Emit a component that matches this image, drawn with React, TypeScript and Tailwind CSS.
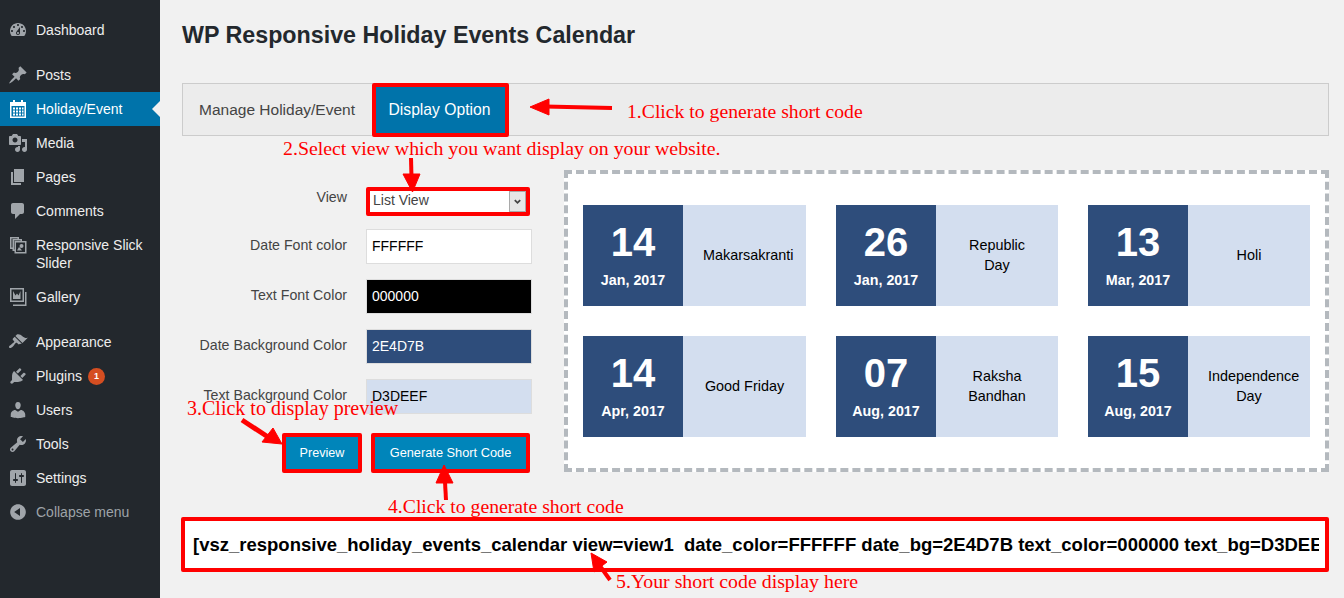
import React from "react";

interface MenuItem {
  label: string;
  icon: React.ReactNode;
  tall?: boolean;
  active?: boolean;
  badge?: string;
  gapBefore?: boolean;
  muted?: boolean;
}

const p = (d: string) => <path d={d} />;

const icons = {
  dashboard: p("M3.76 16h12.48c1.1-1.37 1.76-3.11 1.76-5 0-4.42-3.58-8-8-8s-8 3.58-8 8c0 1.89.66 3.63 1.76 5zM10 4c.55 0 1 .45 1 1s-.45 1-1 1-1-.45-1-1 .45-1 1-1zM6 6c.55 0 1 .45 1 1s-.45 1-1 1-1-.45-1-1 .45-1 1-1zm8 0c.55 0 1 .45 1 1s-.45 1-1 1-1-.45-1-1 .45-1 1-1zm-5.37 5.55L12 7v6c0 1.1-.9 2-2 2s-2-.9-2-2c0-.57.24-1.08.63-1.45zM4 10c.55 0 1 .45 1 1s-.45 1-1 1-1-.45-1-1 .45-1 1-1zm12 0c.55 0 1 .45 1 1s-.45 1-1 1-1-.45-1-1 .45-1 1-1zm-5 3c0-.55-.45-1-1-1s-1 .45-1 1 .45 1 1 1 1-.45 1-1z"),
  post: p("M10.44 3.02l1.82-1.82 6.36 6.35-1.83 1.82c-1.05-.68-2.48-.57-3.41.36l-.75.75c-.92.93-1.04 2.35-.35 3.41l-1.83 1.82-2.41-2.41-2.8 2.79c-.42.42-3.38 2.71-3.8 2.29s1.86-3.39 2.28-3.81l2.79-2.79L4.1 9.36l1.83-1.82c1.05.69 2.48.57 3.4-.36l.75-.75c.93-.92 1.05-2.35.36-3.41z"),
  calendar: (
    <path
      fillRule="evenodd"
      d="M5 1h2v2h6V1h2v2h3v16H2V3h3V1zM3.5 7v10.5h13V7h-13zM5 8.5h2v2H5v-2zm3 0h2v2H8v-2zm3 0h2v2h-2v-2zm3 0h1.5v2H14v-2zM5 11.5h2v2H5v-2zm3 0h2v2H8v-2zm3 0h2v2h-2v-2zm3 0h1.5v2H14v-2zM5 14.5h2v2H5v-2zm3 0h2v2H8v-2zm3 0h2v2h-2v-2zm3 0h1.5v2H14v-2z"
    />
  ),
  media: p("M13 11V4c0-.55-.45-1-1-1h-1.67L9 1H5L3.67 3H2c-.55 0-1 .45-1 1v7c0 .55.45 1 1 1h10c.55 0 1-.45 1-1zM7 4.5c1.38 0 2.5 1.12 2.5 2.5S8.38 9.5 7 9.5 4.5 8.38 4.5 7 5.62 4.5 7 4.5zM14 6h5v10.5c0 1.38-1.12 2.5-2.5 2.5S14 17.88 14 16.5s1.12-2.5 2.5-2.5c.17 0 .34.02.5.05V9h-3V6zm-4 8.05V13h2v3.5c0 1.38-1.12 2.5-2.5 2.5S7 17.88 7 16.5 8.12 14 9.5 14c.17 0 .34.02.5.05z"),
  page: p("M6 15V2h10v13H6zm-1 1h8v2H3V5h2v11z"),
  comments: p("M5 2h9c1.1 0 2 .9 2 2v7c0 1.1-.9 2-2 2h-2l-5 5v-5H5c-1.1 0-2-.9-2-2V4c0-1.1.9-2 2-2z"),
  slides: (
    <path
      fillRule="evenodd"
      d="M2 2h9v2h3v2h4.500v12.500H6.500V16H4.500v-2H2V2zm1.500 1.500v9H4.500V4H9.500v-.5H3.500zM6 5.500V14.500h.5V6h6v-.5H6zM8 7.500V17h9V7.500H8zM13.500 9a2 2 0 1 1 0 4 2 2 0 0 1 0-4zM9 15.500l2-3.500 1.500 1.500 1.500 2H9z"
    />
  ),
  gallery: (
    <path
      fillRule="evenodd"
      d="M2 1h14v14H2V1zm1.500 1.500v11h11v-11h-11zM5 4l2.500 4.500L9 6.500l1.500 2L12.500 4v8H5V4zM17 5h1.500v14H5v-1.500h12V5z"
    />
  ),
  appearance: p("M14.48 11.06L7.41 3.99l1.5-1.5c.5-.56 2.3-.47 3.51.32 1.21.8 1.43 1.28 2.91 2.1 1.18.64 2.45 1.26 4.45.85zm-.71.71L6.7 4.7 4.93 6.47c-.39.39-.39 1.02 0 1.41l1.06 1.06c.39.39.39 1.03 0 1.42-.6.6-1.43 1.11-2.21 1.69-.35.26-.7.53-1.01.84C1.43 13.23.4 14.84 1.3 15.74c.9.89 2.51-.13 3.85-1.47.31-.31.58-.66.85-1.02.57-.78 1.08-1.61 1.69-2.21.39-.39 1.02-.39 1.41 0l1.06 1.06c.39.39 1.02.39 1.41 0z"),
  plugins: p("M13.11 4.36L9.87 7.6 8 5.73l3.24-3.24c.35-.34 1.05-.2 1.56.32.52.51.66 1.21.31 1.55zm-8 1.77l.91-1.12 9.01 9.01-1.19.84c-.71.71-2.63 1.16-3.82 1.16H6.14L4.9 17.26c-.59.59-1.54.59-2.12 0-.59-.58-.59-1.53 0-2.12l1.24-1.24v-3.88c0-1.13.4-3.19 1.09-3.89zm7.26 3.97l3.24-3.24c.34-.35 1.04-.21 1.55.31.52.51.66 1.21.31 1.55l-3.24 3.25z"),
  users: p("M10 9.25c-2.27 0-2.73-3.44-2.73-3.44C7 4.02 7.82 2 9.97 2c2.16 0 2.98 2.02 2.71 3.81 0 0-.41 3.44-2.68 3.44zm0 2.57L12.72 10c2.39 0 4.52 2.33 4.52 4.53v2.49s-3.65 1.13-7.24 1.13c-3.65 0-7.24-1.13-7.24-1.13v-2.49c0-2.25 1.94-4.48 4.47-4.48z"),
  tools: p("M16.68 9.77c-1.34 1.34-3.3 1.67-4.95.99l-5.41 6.52c-.99.99-2.59.99-3.58 0s-.99-2.59 0-3.57l6.52-5.42c-.68-1.65-.35-3.61.99-4.95 1.28-1.28 3.12-1.62 4.72-1.06l-2.89 2.89 2.82 2.82 2.86-2.87c.53 1.58.18 3.39-1.08 4.65zM3.81 16.21c.4.39 1.04.39 1.43 0 .4-.4.4-1.04 0-1.43-.39-.4-1.03-.4-1.43 0-.39.39-.39 1.03 0 1.43z"),
  settings: p("M18 16V4c0-1.1-.9-2-2-2H4c-1.1 0-2 .9-2 2v12c0 1.1.9 2 2 2h12c1.1 0 2-.9 2-2zM8 11h1c.55 0 1 .45 1 1s-.45 1-1 1H8v1.5c0 .28-.22.5-.5.5s-.5-.22-.5-.5V13H6c-.55 0-1-.45-1-1s.45-1 1-1h1V5.500c0-.28.22-.5.5-.5s.5.22.5.5V11zm5-2h-1c-.55 0-1-.45-1-1s.45-1 1-1h1V5.500c0-.28.22-.5.5-.5s.5.22.5.5V7h1c.55 0 1 .45 1 1s-.45 1-1 1h-1v5.500c0 .28-.22.5-.5.5s-.5-.22-.5-.5V9z"),
  collapse: p("M10 2.16c4.33 0 7.84 3.51 7.84 7.84s-3.51 7.84-7.84 7.84S2.16 14.33 2.16 10 5.71 2.16 10 2.16zm2 11.72V6.12L6.18 9.97z"),
};

const menu: MenuItem[] = [
  { label: "Dashboard", icon: icons.dashboard },
  { label: "Posts", icon: icons.post, gapBefore: true },
  { label: "Holiday/Event", icon: icons.calendar, active: true },
  { label: "Media", icon: icons.media },
  { label: "Pages", icon: icons.page },
  { label: "Comments", icon: icons.comments },
  { label: "Responsive Slick Slider", icon: icons.slides, tall: true },
  { label: "Gallery", icon: icons.gallery },
  { label: "Appearance", icon: icons.appearance, gapBefore: true },
  { label: "Plugins", icon: icons.plugins, badge: "1" },
  { label: "Users", icon: icons.users },
  { label: "Tools", icon: icons.tools },
  { label: "Settings", icon: icons.settings },
  { label: "Collapse menu", icon: icons.collapse, muted: true },
];

const events = [
  { day: "14", date: "Jan, 2017", title: "Makarsakranti" },
  { day: "26", date: "Jan, 2017", title: "Republic Day" },
  { day: "13", date: "Mar, 2017", title: "Holi" },
  { day: "14", date: "Apr, 2017", title: "Good Friday" },
  { day: "07", date: "Aug, 2017", title: "Raksha Bandhan" },
  { day: "15", date: "Aug, 2017", title: "Independence Day" },
];

const fields = [
  { label: "Date Font color", value: "FFFFFF", cls: "bg-white text-black border-[#dddddd]" },
  { label: "Text Font Color", value: "000000", cls: "bg-black text-white border-[#dddddd]" },
  { label: "Date Background Color", value: "2E4D7B", cls: "bg-[#2e4d7b] text-white border-[#dddddd]" },
  { label: "Text Background Color", value: "D3DEEF", cls: "bg-[#d3deef] text-black border-[#dddddd]" },
];

function Sidebar() {
  return (
    <aside className="w-[160px] shrink-0 bg-[#23282d] pt-[13px] text-[14px] leading-[18px]">
      {menu.map((item) => (
        <div
          key={item.label}
          className={`relative flex items-center pl-[36px] pr-2 ${item.tall ? "h-[52px]" : "h-[34px]"} ${
            item.gapBefore ? "mt-[11px]" : ""
          } ${item.active ? "bg-[#0073aa] text-white" : item.muted ? "text-[#9ea3a8]" : "text-[#eeeeee]"}`}
        >
          <svg
            viewBox="0 0 20 20"
            fill="currentColor"
            className={`absolute left-[8px] top-[7px] h-[20px] w-[20px] ${item.active ? "text-white" : "text-[#a0a5aa]"}`}
          >
            {item.icon}
          </svg>
          <span>{item.label}</span>
          {item.badge && (
            <span className="ml-[6px] flex h-[17px] w-[17px] items-center justify-center rounded-full bg-[#d54e21] text-[9px] font-bold text-white">
              {item.badge}
            </span>
          )}
          {item.active && (
            <span className="absolute right-0 top-[9px] h-0 w-0 border-y-[8px] border-r-[8px] border-y-transparent border-r-[#f1f1f1]" />
          )}
        </div>
      ))}
    </aside>
  );
}

function EventCard({ day, date, title }: { day: string; date: string; title: string }) {
  return (
    <div className="flex h-[101px] bg-[#d3deef]">
      <div className="flex w-[100px] shrink-0 flex-col items-center bg-[#2e4d7b] pt-[13px] font-bold text-white">
        <div className="text-[40px] leading-[48px]">{day}</div>
        <div className="mt-[5px] text-[14.3px] leading-[18px]">{date}</div>
      </div>
      <div className="flex min-w-0 flex-1 items-center px-[20px] pb-[2px] text-[14.4px] leading-[20px] text-black">
        <div className="w-full text-center">{title}</div>
      </div>
    </div>
  );
}

function Annotations() {
  const notes = [
    { text: "1.Click to generate short code", cls: "left-[627px] top-[100px] text-[19.7px]" },
    { text: "2.Select view which you want display on your website.", cls: "left-[283px] top-[137px] text-[19.85px]" },
    { text: "3.Click to display preview", cls: "left-[187px] top-[397px] text-[20px]" },
    { text: "4.Click to generate short code", cls: "left-[388px] top-[495px] text-[19.7px]" },
    { text: "5.Your short code display here", cls: "left-[616px] top-[570px] text-[19.85px]" },
  ];
  return (
    <>
      {notes.map((n) => (
        <div
          key={n.text}
          className={`absolute whitespace-nowrap font-['Liberation_Serif',serif] leading-[23px] text-[#ff0000] ${n.cls}`}
        >
          {n.text}
        </div>
      ))}
      <svg className="pointer-events-none absolute left-0 top-0 h-[598px] w-[1344px]" viewBox="0 0 1344 598">
        <g fill="#ff0000" stroke="#ff0000">
          <path d="M612 108L545 106.500" strokeWidth="4" />
          <path d="M530 107L549 99V115Z" />
          <path d="M411 158L411.500 178" strokeWidth="4" />
          <path d="M403 174H420L412.500 192Z" />
          <path d="M242 420L268 437" strokeWidth="5" />
          <path d="M282 444L262 442L273 428Z" />
          <path d="M446 500L445 482" strokeWidth="4" />
          <path d="M444 465L453 483H436Z" />
          <path d="M610 580L600 566" strokeWidth="4" />
          <path d="M591 553L607 562L594 572Z" />
        </g>
      </svg>
    </>
  );
}

export default function App() {
  return (
    <div className="relative flex h-[598px] w-[1344px] overflow-hidden bg-[#f1f1f1] font-['Liberation_Sans',Arial,sans-serif]">
      <Sidebar />
      <main className="w-[1184px] pl-[22px] pr-[15px]">
        <h1 className="pt-[21px] text-[23.25px] font-bold leading-[29px] text-[#23282d]">
          WP Responsive Holiday Events Calendar
        </h1>

        {/* Tabs */}
        <div className="mt-[33px] flex h-[53px] border border-[#cccccc] bg-[#ececec]">
          <div className="flex w-[189px] items-center pl-[16px] text-[15.5px] text-[#444444]">Manage Holiday/Event</div>
          <div className="-mt-[1px] flex h-[54px] w-[137px] items-center justify-center rounded-[2px] border-[4px] border-[#ff0000] bg-[#0073aa] pr-[2px] text-[15.7px] text-white">
            Display Option
          </div>
        </div>

        <div className="mt-[34px] flex">
          {/* Form */}
          <div className="w-[382px] shrink-0 pt-[17px]">
            <div className="flex h-[30px] items-start">
              <div className="w-[165px] text-right text-[14.2px] leading-[20px] text-[#444444]">View</div>
              <div className="ml-[19px] flex h-[29px] w-[164px] items-center rounded-[2px] border-[4px] border-[#ff0000] bg-white pl-[3px] text-[14px] text-[#444444]">
                <span className="flex-1 pb-[2px]">List View</span>
                <span className="flex h-[21px] w-[17px] items-center justify-center border border-[#a9a9a9] bg-[#e6e6e6]">
                  <svg viewBox="0 0 10 10" className="h-[9px] w-[9px]">
                    <path d="M2 3.500L5 6.500L8 3.500" fill="none" stroke="#444444" strokeWidth="2" />
                  </svg>
                </span>
              </div>
            </div>
            <div className="mt-[12px] flex flex-col gap-[15px]">
              {fields.map((f) => (
                <div key={f.label} className="flex h-[35px] items-start">
                  <div className="w-[165px] shrink-0 whitespace-nowrap pt-[6px] text-right text-[14.2px] leading-[20px] text-[#444444]">
                    {f.label}
                  </div>
                  <div
                    className={`ml-[19px] flex h-[35px] w-[166px] items-center border pl-[5px] text-[14px] ${f.cls}`}
                  >
                    {f.value}
                  </div>
                </div>
              ))}
            </div>
            <div className="mt-[19px] flex gap-[9px] pl-[100px] text-white">
              <div className="flex h-[40px] w-[80px] items-center justify-center rounded-[2px] border-[4px] border-[#ff0000] bg-[#0085ba] text-[12.6px]">
                Preview
              </div>
              <div className="flex h-[40px] w-[159px] items-center justify-center rounded-[2px] border-[4px] border-[#ff0000] bg-[#0085ba] text-[12.8px]">
                Generate Short Code
              </div>
            </div>
          </div>

          {/* Preview */}
          <div className="grid h-[302px] w-[765px] grid-cols-[223px_222px_222px] content-start gap-[30px] border-[4px] border-dashed border-[#b4b9be] bg-white px-[15px] pt-[31px]">
            {events.map((e, i) => (
              <EventCard key={i} {...e} />
            ))}
          </div>
        </div>

        {/* Short code */}
        <div className="-ml-[1px] mt-[44px] flex h-[55px] items-center overflow-hidden rounded-[2px] border-[4px] border-[#ff0000] bg-white pl-[8px] pr-[6px]">
          <span className="block overflow-hidden whitespace-pre text-[18.5px] font-bold text-black">
            {"[vsz_responsive_holiday_events_calendar view=view1  date_color=FFFFFF date_bg=2E4D7B text_color=000000 text_bg=D3DEEF]"}
          </span>
        </div>
      </main>
      <Annotations />
    </div>
  );
}
